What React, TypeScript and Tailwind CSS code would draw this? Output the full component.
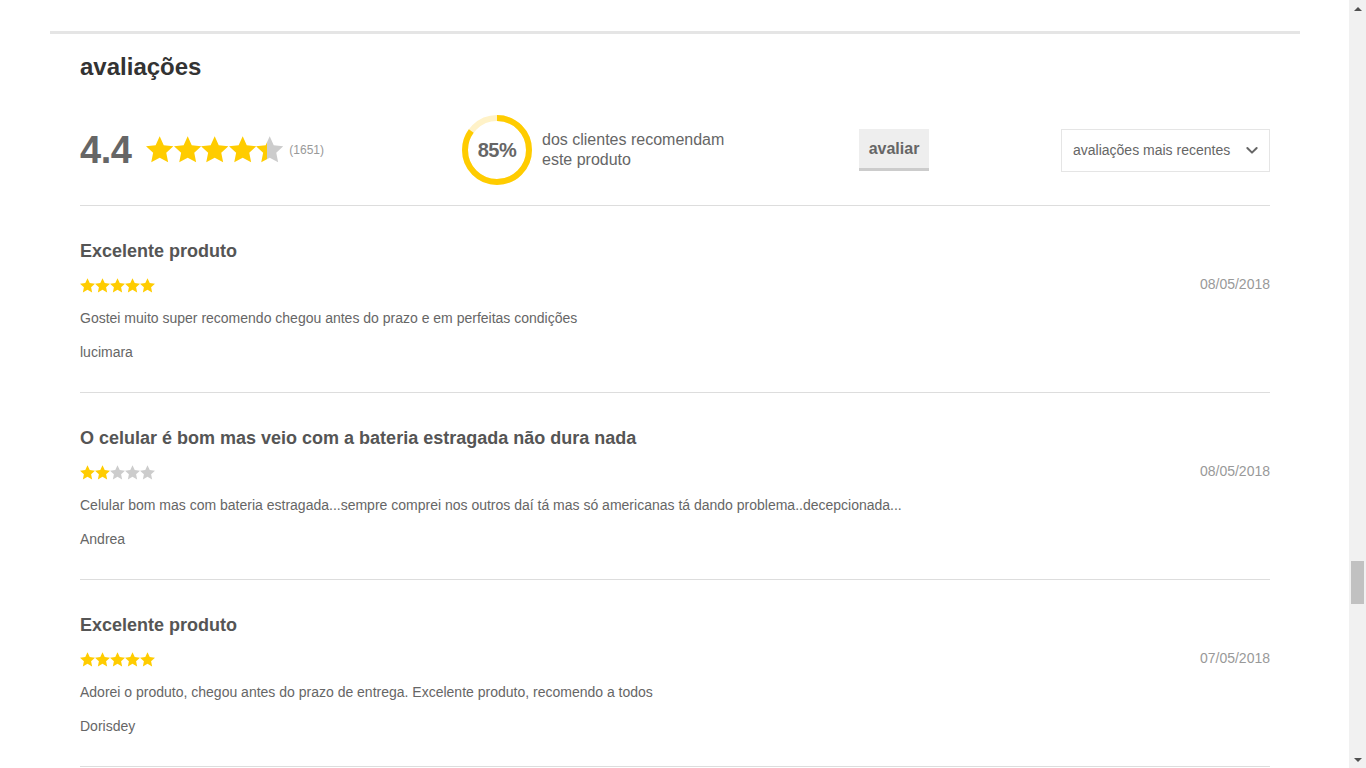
import React from 'react';

// five-point star filling the 24px box edge to edge
const STAR = (() => {
  const R = 12.6;
  const r = R * 0.48;
  const cx = 12;
  const cy = 12.9;
  const pts: string[] = [];
  for (let i = 0; i < 10; i++) {
    const rad = i % 2 === 0 ? R : r;
    const a = (Math.PI / 5) * i - Math.PI / 2;
    pts.push(`${(cx + rad * Math.cos(a)).toFixed(2)},${(cy + rad * Math.sin(a)).toFixed(2)}`);
  }
  return pts.join(' ');
})();

function Star({ size, fill, id }: { size: number; fill: number; id: string }) {
  // fill: 0..1 portion painted yellow
  return (
    <svg width={size} height={size} viewBox="0 0 24 24" className="block">
      <defs>
        <linearGradient id={id} x1="0" x2="1" y1="0" y2="0">
          <stop offset={fill} stopColor="#ffcc00" />
          <stop offset={fill} stopColor="#cccccc" />
        </linearGradient>
      </defs>
      <polygon points={STAR} fill={`url(#${id})`} />
    </svg>
  );
}

function Stars({ value, size, prefix }: { value: number; size: number; prefix: string }) {
  return (
    <div className="flex">
      {[0, 1, 2, 3, 4].map(i => (
        <Star key={i} size={size} id={`${prefix}-${i}`} fill={Math.max(0, Math.min(1, value - i))} />
      ))}
    </div>
  );
}

function Ring({ pct }: { pct: number }) {
  const r = 32;
  const c = 2 * Math.PI * r;
  return (
    <div className="relative w-[70px] h-[70px] flex items-center justify-center">
      <svg width="70" height="70" viewBox="0 0 70 70" className="absolute inset-0 -rotate-90">
        <circle cx="35" cy="35" r={r} fill="none" stroke="#fff2c8" strokeWidth="6" />
        <circle cx="35" cy="35" r={r} fill="none" stroke="#ffcc00" strokeWidth="6" strokeDasharray={`${c * pct} ${c}`} />
      </svg>
      <span className="relative text-[20px] font-bold text-[#666] tracking-[-0.5px]">{pct * 100}%</span>
    </div>
  );
}

const reviews = [
  { title: 'Excelente produto', rating: 5, date: '08/05/2018', text: 'Gostei muito super recomendo chegou antes do prazo e em perfeitas condições', author: 'lucimara' },
  { title: 'O celular é bom mas veio com a bateria estragada não dura nada', rating: 2, date: '08/05/2018', text: 'Celular bom mas com bateria estragada...sempre comprei nos outros daí tá mas só americanas tá dando problema..decepcionada...', author: 'Andrea' },
  { title: 'Excelente produto', rating: 5, date: '07/05/2018', text: 'Adorei o produto, chegou antes do prazo de entrega. Excelente produto, recomendo a todos', author: 'Dorisdey' },
];

export default function App() {
  return (
    <div className="h-[768px] overflow-hidden flex bg-white font-['Liberation_Sans',Arial,sans-serif]">
      <div className="flex-1 pt-[31px]">
        <div className="ml-[50px] w-[1250px] border-t-[3px] border-[#e5e5e5] px-[30px]">
          <h2 className="pt-[19px] text-[24px] leading-[28px] font-bold text-[#333]">avaliações</h2>

          {/* Summary */}
          <div className="mt-[34px] mb-[20px] h-[70px] flex items-center">
            <div className="w-[382px] flex items-center">
              <span className="text-[38px] leading-none font-bold text-[#666] tracking-[-0.5px]">4.4</span>
              <div className="ml-[15px]">
                <Stars value={4.4} size={27.4} prefix="big" />
              </div>
              <span className="ml-[6px] text-[12px] text-[#999]">(1651)</span>
            </div>
            <div className="w-[397px] flex items-center">
              <Ring pct={0.85} />
              <p className="ml-[10px] text-[16px] leading-[20px] text-[#666]">
                dos clientes recomendam<br />este produto
              </p>
            </div>
            <button className="w-[70px] h-[42px] bg-[#eeeeee] border-b-[3px] border-[#cccccc] text-[16px] font-bold text-[#666]">
              avaliar
            </button>
            <div className="ml-auto w-[209px] h-[43px] border border-[#e5e5e5] flex items-center justify-between pl-[11px] pr-[9px] text-[14px] text-[#666]">
              <span>avaliações mais recentes</span>
              <svg width="16" height="16" viewBox="0 0 24 24" fill="none" stroke="#666" strokeWidth="3" strokeLinecap="round" strokeLinejoin="round">
                <path d="M5 9l7 7 7-7" />
              </svg>
            </div>
          </div>

          {/* Reviews */}
          {reviews.map((r, idx) => (
            <div key={idx} className="border-t border-[#dddddd] pt-[34px] pb-[32px]">
              <h3 className="text-[18px] leading-[22px] font-bold text-[#555]">{r.title}</h3>
              <div className="mt-[16px] flex items-center justify-between">
                <Stars value={r.rating} size={15} prefix={`r${idx}`} />
                <span className="text-[14px] leading-[16px] text-[#999] -mt-[4px]">{r.date}</span>
              </div>
              <p className="mt-[17px] text-[14px] leading-[16px] text-[#666]">{r.text}</p>
              <p className="mt-[18px] text-[14px] leading-[16px] text-[#666]">{r.author}</p>
            </div>
          ))}
          <div className="border-t border-[#dddddd]" />
        </div>
      </div>

      {/* Scrollbar */}
      <div className="w-[17px] h-[768px] bg-[#f1f1f1] flex flex-col items-center">
        <div className="h-[17px] flex items-center justify-center">
          <div className="w-0 h-0 border-l-[4px] border-r-[4px] border-b-[4px] border-l-transparent border-r-transparent border-b-[#505050]" />
        </div>
        <div className="mt-[544px] w-[13px] h-[43px] bg-[#c1c1c1]" />
        <div className="mt-auto h-[17px] flex items-center justify-center">
          <div className="w-0 h-0 border-l-[4px] border-r-[4px] border-t-[4px] border-l-transparent border-r-transparent border-t-[#505050]" />
        </div>
      </div>
    </div>
  );
}
